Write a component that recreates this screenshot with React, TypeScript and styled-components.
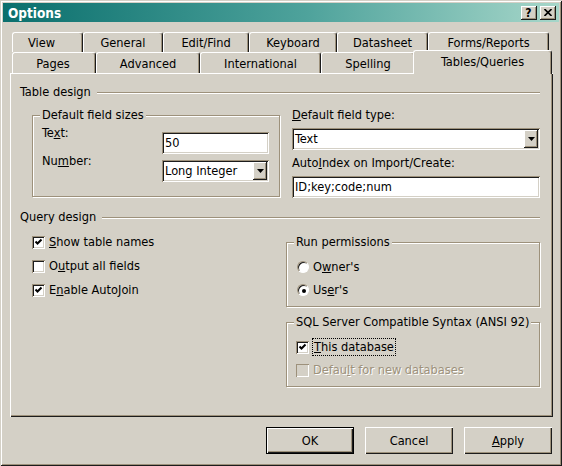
import styled, { createGlobalStyle } from 'styled-components';

const face = '#d4d0c6';
const shade = '#9d917b';
const dark = '#1c1c1c';
const light = '#ffffff';

const GlobalStyle = createGlobalStyle`
  html, body {
    margin: 0;
    padding: 0;
    background: ${face};
  }
  body {
    font-family: 'DejaVu Sans Condensed', 'Liberation Sans', sans-serif;
    font-size: 12.7px;
    color: #000;
  }
  * {
    box-sizing: border-box;
  }
`;

const sunken = `
  box-shadow: inset 1px 1px 0 ${shade}, inset -1px -1px 0 ${light},
    inset 2px 2px 0 ${dark}, inset -2px -2px 0 ${face};
`;

const raised = `
  box-shadow: inset -1px -1px 0 ${dark}, inset 1px 1px 0 ${light},
    inset -2px -2px 0 ${shade};
`;

const Window = styled.div`
  width: 562px;
  height: 466px;
  padding: 3px;
  background: ${face};
  box-shadow: inset 1px 1px 0 ${face}, inset -1px -1px 0 ${dark},
    inset 2px 2px 0 ${light}, inset -2px -2px 0 ${shade};
  display: flex;
  flex-direction: column;
`;

const TitleBar = styled.div`
  height: 19px;
  display: flex;
  align-items: center;
  padding: 0 3px;
  background: linear-gradient(90deg, #0a6f6d 0%, #4fa39c 55%, #a6d6c9 100%);
`;

const TitleText = styled.span`
  flex: 1;
  color: #fff;
  font-weight: bold;
  font-size: 13.5px;
  padding-left: 2px;
`;

const CaptionButton = styled.div<{ $gap?: number }>`
  width: 16px;
  height: 14px;
  margin-left: ${(p) => p.$gap ?? 0}px;
  background: ${face};
  ${raised}
  display: flex;
  align-items: center;
  justify-content: center;
  font-weight: bold;
  font-size: 12px;
  line-height: 14px;
  padding-right: 1px;
`;

const Body = styled.div`
  flex: 1;
  display: flex;
  flex-direction: column;
  padding: 10px 6px 0 7px;
`;

const TabStrip = styled.div`
  margin-left: 2px;
`;

const TabRow = styled.div<{ $h: number }>`
  display: flex;
  align-items: flex-end;
  height: ${(p) => p.$h}px;
`;

const Tab = styled.div<{ $w: number; $h: number; $shift?: number; $active?: boolean }>`
  position: relative;
  z-index: ${(p) => (p.$active ? 1 : 0)};
  width: ${(p) => p.$w + (p.$active ? 4 : 0)}px;
  height: ${(p) => (p.$active ? 24 : p.$h)}px;
  margin: ${(p) => (p.$active ? '0 -2px -1px -2px' : '0')};
  padding: 0 ${(p) => p.$shift ?? 0}px ${(p) => (p.$active ? 2 : 0)}px 0;
  background: ${face};
  border-top: 1px solid ${light};
  border-left: 1px solid ${light};
  border-right: 1px solid ${dark};
  border-radius: 3px 3px 0 0;
  box-shadow: inset -1px 0 0 ${shade};
  display: flex;
  align-items: center;
  justify-content: center;
  white-space: nowrap;
`;

const Panel = styled.div`
  width: 543px;
  height: 344px;
  padding: 12px 13px 0 10px;
  box-shadow: inset 1px 1px 0 ${light}, inset -1px -1px 0 ${dark},
    inset -2px -2px 0 ${shade};
`;

const SectionHeader = styled.div<{ $mt?: number }>`
  display: flex;
  align-items: center;
  height: 14px;
  line-height: 14px;
  margin-top: ${(p) => p.$mt ?? 0}px;
`;

const Rule = styled.div`
  flex: 1;
  height: 2px;
  margin: 2px 0 0 6px;
  border-top: 1px solid ${shade};
  border-bottom: 1px solid ${light};
`;

const TableGrid = styled.div`
  display: grid;
  grid-template-columns: 248px 248px;
  column-gap: 12px;
  margin: 9px 0 0 12px;
  align-items: start;
`;

const QueryGrid = styled.div`
  display: grid;
  grid-template-columns: 254px 254px;
  margin: 10px 0 0 12px;
  align-items: start;
`;

const GroupBox = styled.div<{ $mt: number; $h: number; $pad: string }>`
  position: relative;
  margin-top: ${(p) => p.$mt}px;
  height: ${(p) => p.$h}px;
  padding: ${(p) => p.$pad};
  border: 1px solid ${shade};
  box-shadow: inset 1px 1px 0 ${light}, 1px 1px 0 ${light};
`;

const Legend = styled.span`
  position: absolute;
  top: -8px;
  left: 7px;
  padding: 0 2px;
  line-height: 14px;
  background: ${face};
  white-space: nowrap;
`;

const FieldRow = styled.div`
  display: flex;
  align-items: flex-start;
  height: 28px;
`;

const FieldLabel = styled.div<{ $w?: number; $mt?: number }>`
  width: ${(p) => (p.$w ? `${p.$w}px` : 'auto')};
  margin-top: ${(p) => p.$mt ?? 0}px;
  line-height: 14px;
  white-space: nowrap;
`;

const Column = styled.div`
  display: flex;
  flex-direction: column;
`;

const Field = styled.div<{ $w?: number; $mt?: number }>`
  width: ${(p) => (p.$w ? `${p.$w}px` : '100%')};
  height: 22px;
  margin-top: ${(p) => p.$mt ?? 0}px;
  background: #fff;
  ${sunken}
  display: flex;
  align-items: center;
  padding: 0 2px 0 3px;
  line-height: 22px;
  white-space: nowrap;
`;

const FieldValue = styled.span`
  flex: 1;
`;

const DropButton = styled.div`
  width: 14px;
  height: 18px;
  background: ${face};
  ${raised}
  display: flex;
  align-items: center;
  justify-content: center;
`;

const CheckList = styled.div`
  display: flex;
  flex-direction: column;
  gap: 8px;
`;

const CheckRow = styled.div<{ $disabled?: boolean }>`
  display: flex;
  align-items: center;
  gap: 4px;
  height: 16px;
  line-height: 14px;
  white-space: nowrap;
  color: ${(p) => (p.$disabled ? shade : '#000')};
  text-shadow: ${(p) => (p.$disabled ? `1px 1px 0 ${light}` : 'none')};
`;

const BoxRows = styled.div`
  display: flex;
  flex-direction: column;
  gap: 7px;
`;

const CheckBox = styled.span<{ $disabled?: boolean }>`
  flex: none;
  width: 13px;
  height: 13px;
  display: flex;
  background: ${(p) => (p.$disabled ? face : '#fff')};
  box-shadow: ${(p) =>
    p.$disabled
      ? `inset 1px 1px 0 ${shade}, inset -1px -1px 0 ${light}`
      : `inset 1px 1px 0 ${shade}, inset -1px -1px 0 ${light}, inset 2px 2px 0 ${dark}, inset -2px -2px 0 ${face}`};
`;

const RadioSlot = styled.span`
  flex: none;
  width: 13px;
  height: 13px;
  display: flex;
  align-items: center;
  justify-content: flex-end;
`;

const RadioDot = styled.span<{ $on?: boolean }>`
  width: 12px;
  height: 12px;
  border-radius: 50%;
  background: #fff;
  border: 1px solid;
  border-color: ${shade} ${light} ${light} ${shade};
  box-shadow: inset 1px 1px 0 ${dark};
  display: flex;
  align-items: center;
  justify-content: center;

  &::after {
    content: '';
    display: ${(p) => (p.$on ? 'block' : 'none')};
    width: 4px;
    height: 4px;
    border-radius: 50%;
    background: #000;
    margin: 1px 0 0 1px;
  }
`;

const FocusLabel = styled.span`
  border: 1px dotted #000;
  padding: 0 1px;
  margin-left: -1px;
  line-height: 16px;
`;

const ButtonRow = styled.div`
  display: flex;
  justify-content: flex-end;
  gap: 11px;
  margin: 10px 1px 0 0;
`;

const PushButton = styled.button<{ $default?: boolean }>`
  width: 88px;
  height: 27px;
  padding: 0;
  border: 0;
  font: inherit;
  color: #000;
  background: ${face};
  box-shadow: ${(p) =>
    p.$default
      ? `inset 0 0 0 1px #000, inset 2px 2px 0 ${light}, inset -2px -2px 0 ${dark}, inset -3px -3px 0 ${shade}`
      : `inset 1px 1px 0 ${light}, inset -1px -1px 0 ${dark}, inset -2px -2px 0 ${shade}`};
`;

function Check() {
  return (
    <svg width='13' height='13' viewBox='0 0 13 13'>
      <path d='M3.5 5.5 L5.5 7.5 L9.5 3.5' fill='none' stroke='#000' strokeWidth='2' />
    </svg>
  );
}

function Arrow() {
  return (
    <svg width='7' height='4' viewBox='0 0 7 4'>
      <polygon points='0,0 7,0 3.5,4' fill='#000' />
    </svg>
  );
}

// label, width, text offset
const topTabs: [string, number, number][] = [
  ['View', 71, 12],
  ['General', 80, 0],
  ['Edit/Find', 86, 0],
  ['Keyboard', 88, 0],
  ['Datasheet', 91, 0],
  ['Forms/Reports', 121, 0],
];

const bottomTabs: [string, number, number][] = [
  ['Pages', 84, 2],
  ['Advanced', 104, 0],
  ['International', 121, 0],
  ['Spelling', 94, 0],
  ['Tables/Queries', 135, 0],
];

export default function App() {
  return (
    <>
      <GlobalStyle />
      <Window>
        <TitleBar>
          <TitleText>Options</TitleText>
          <CaptionButton>?</CaptionButton>
          <CaptionButton $gap={3}>
            <svg width='8' height='7' viewBox='0 0 8 7'>
              <path d='M0.5 0 L7.5 7 M7.5 0 L0.5 7' stroke='#000' strokeWidth='1.6' />
            </svg>
          </CaptionButton>
        </TitleBar>

        <Body>
          <TabStrip>
            <TabRow $h={20}>
              {topTabs.map(([label, w, shift]) => (
                <Tab key={label} $w={w} $h={20} $shift={shift}>
                  {label}
                </Tab>
              ))}
            </TabRow>
            <TabRow $h={21}>
              {bottomTabs.map(([label, w, shift]) => (
                <Tab
                  key={label}
                  $w={w}
                  $h={21}
                  $shift={shift}
                  $active={label === 'Tables/Queries'}
                >
                  {label}
                </Tab>
              ))}
            </TabRow>
          </TabStrip>

          <Panel>
            <SectionHeader>
              Table design
              <Rule />
            </SectionHeader>

            <TableGrid>
              <GroupBox $mt={7} $h={82} $pad='10px 0 0 9px'>
                <Legend>Default field sizes</Legend>
                <FieldRow>
                  <FieldLabel $w={120}>
                    Te<u>x</u>t:
                  </FieldLabel>
                  <Field $w={107} $mt={6}>
                    <FieldValue>50</FieldValue>
                  </Field>
                </FieldRow>
                <FieldRow>
                  <FieldLabel $w={120}>
                    Nu<u>m</u>ber:
                  </FieldLabel>
                  <Field $w={107} $mt={6}>
                    <FieldValue>Long Integer</FieldValue>
                    <DropButton>
                      <Arrow />
                    </DropButton>
                  </Field>
                </FieldRow>
              </GroupBox>

              <Column>
                <FieldLabel>
                  <u>D</u>efault field type:
                </FieldLabel>
                <Field $mt={6}>
                  <FieldValue>Text</FieldValue>
                  <DropButton>
                    <Arrow />
                  </DropButton>
                </Field>
                <FieldLabel $mt={6}>
                  Auto<u>I</u>ndex on Import/Create:
                </FieldLabel>
                <Field $mt={6}>
                  <FieldValue>ID;key;code;num</FieldValue>
                </Field>
              </Column>
            </TableGrid>

            <SectionHeader $mt={12}>
              Query design
              <Rule />
            </SectionHeader>

            <QueryGrid>
              <CheckList>
                <CheckRow>
                  <CheckBox>
                    <Check />
                  </CheckBox>
                  <span>
                    <u>S</u>how table names
                  </span>
                </CheckRow>
                <CheckRow>
                  <CheckBox />
                  <span>
                    O<u>u</u>tput all fields
                  </span>
                </CheckRow>
                <CheckRow>
                  <CheckBox>
                    <Check />
                  </CheckBox>
                  <span>
                    E<u>n</u>able AutoJoin
                  </span>
                </CheckRow>
              </CheckList>

              <Column>
                <GroupBox $mt={8} $h={65} $pad='16px 0 0 9px'>
                  <Legend>Run permissions</Legend>
                  <BoxRows>
                    <CheckRow>
                      <RadioSlot>
                        <RadioDot />
                      </RadioSlot>
                      <span>
                        O<u>w</u>ner's
                      </span>
                    </CheckRow>
                    <CheckRow>
                      <RadioSlot>
                        <RadioDot $on />
                      </RadioSlot>
                      <span>
                        Us<u>e</u>r's
                      </span>
                    </CheckRow>
                  </BoxRows>
                </GroupBox>

                <GroupBox $mt={15} $h={65} $pad='16px 0 0 9px'>
                  <Legend>SQL Server Compatible Syntax (ANSI 92)</Legend>
                  <BoxRows>
                    <CheckRow>
                      <CheckBox>
                        <Check />
                      </CheckBox>
                      <FocusLabel>
                        <u>T</u>his database
                      </FocusLabel>
                    </CheckRow>
                    <CheckRow $disabled>
                      <CheckBox $disabled />
                      <span>
                        Defau<u>l</u>t for new databases
                      </span>
                    </CheckRow>
                  </BoxRows>
                </GroupBox>
              </Column>
            </QueryGrid>
          </Panel>

          <ButtonRow>
            <PushButton $default>OK</PushButton>
            <PushButton>Cancel</PushButton>
            <PushButton>
              <u>A</u>pply
            </PushButton>
          </ButtonRow>
        </Body>
      </Window>
    </>
  );
}
